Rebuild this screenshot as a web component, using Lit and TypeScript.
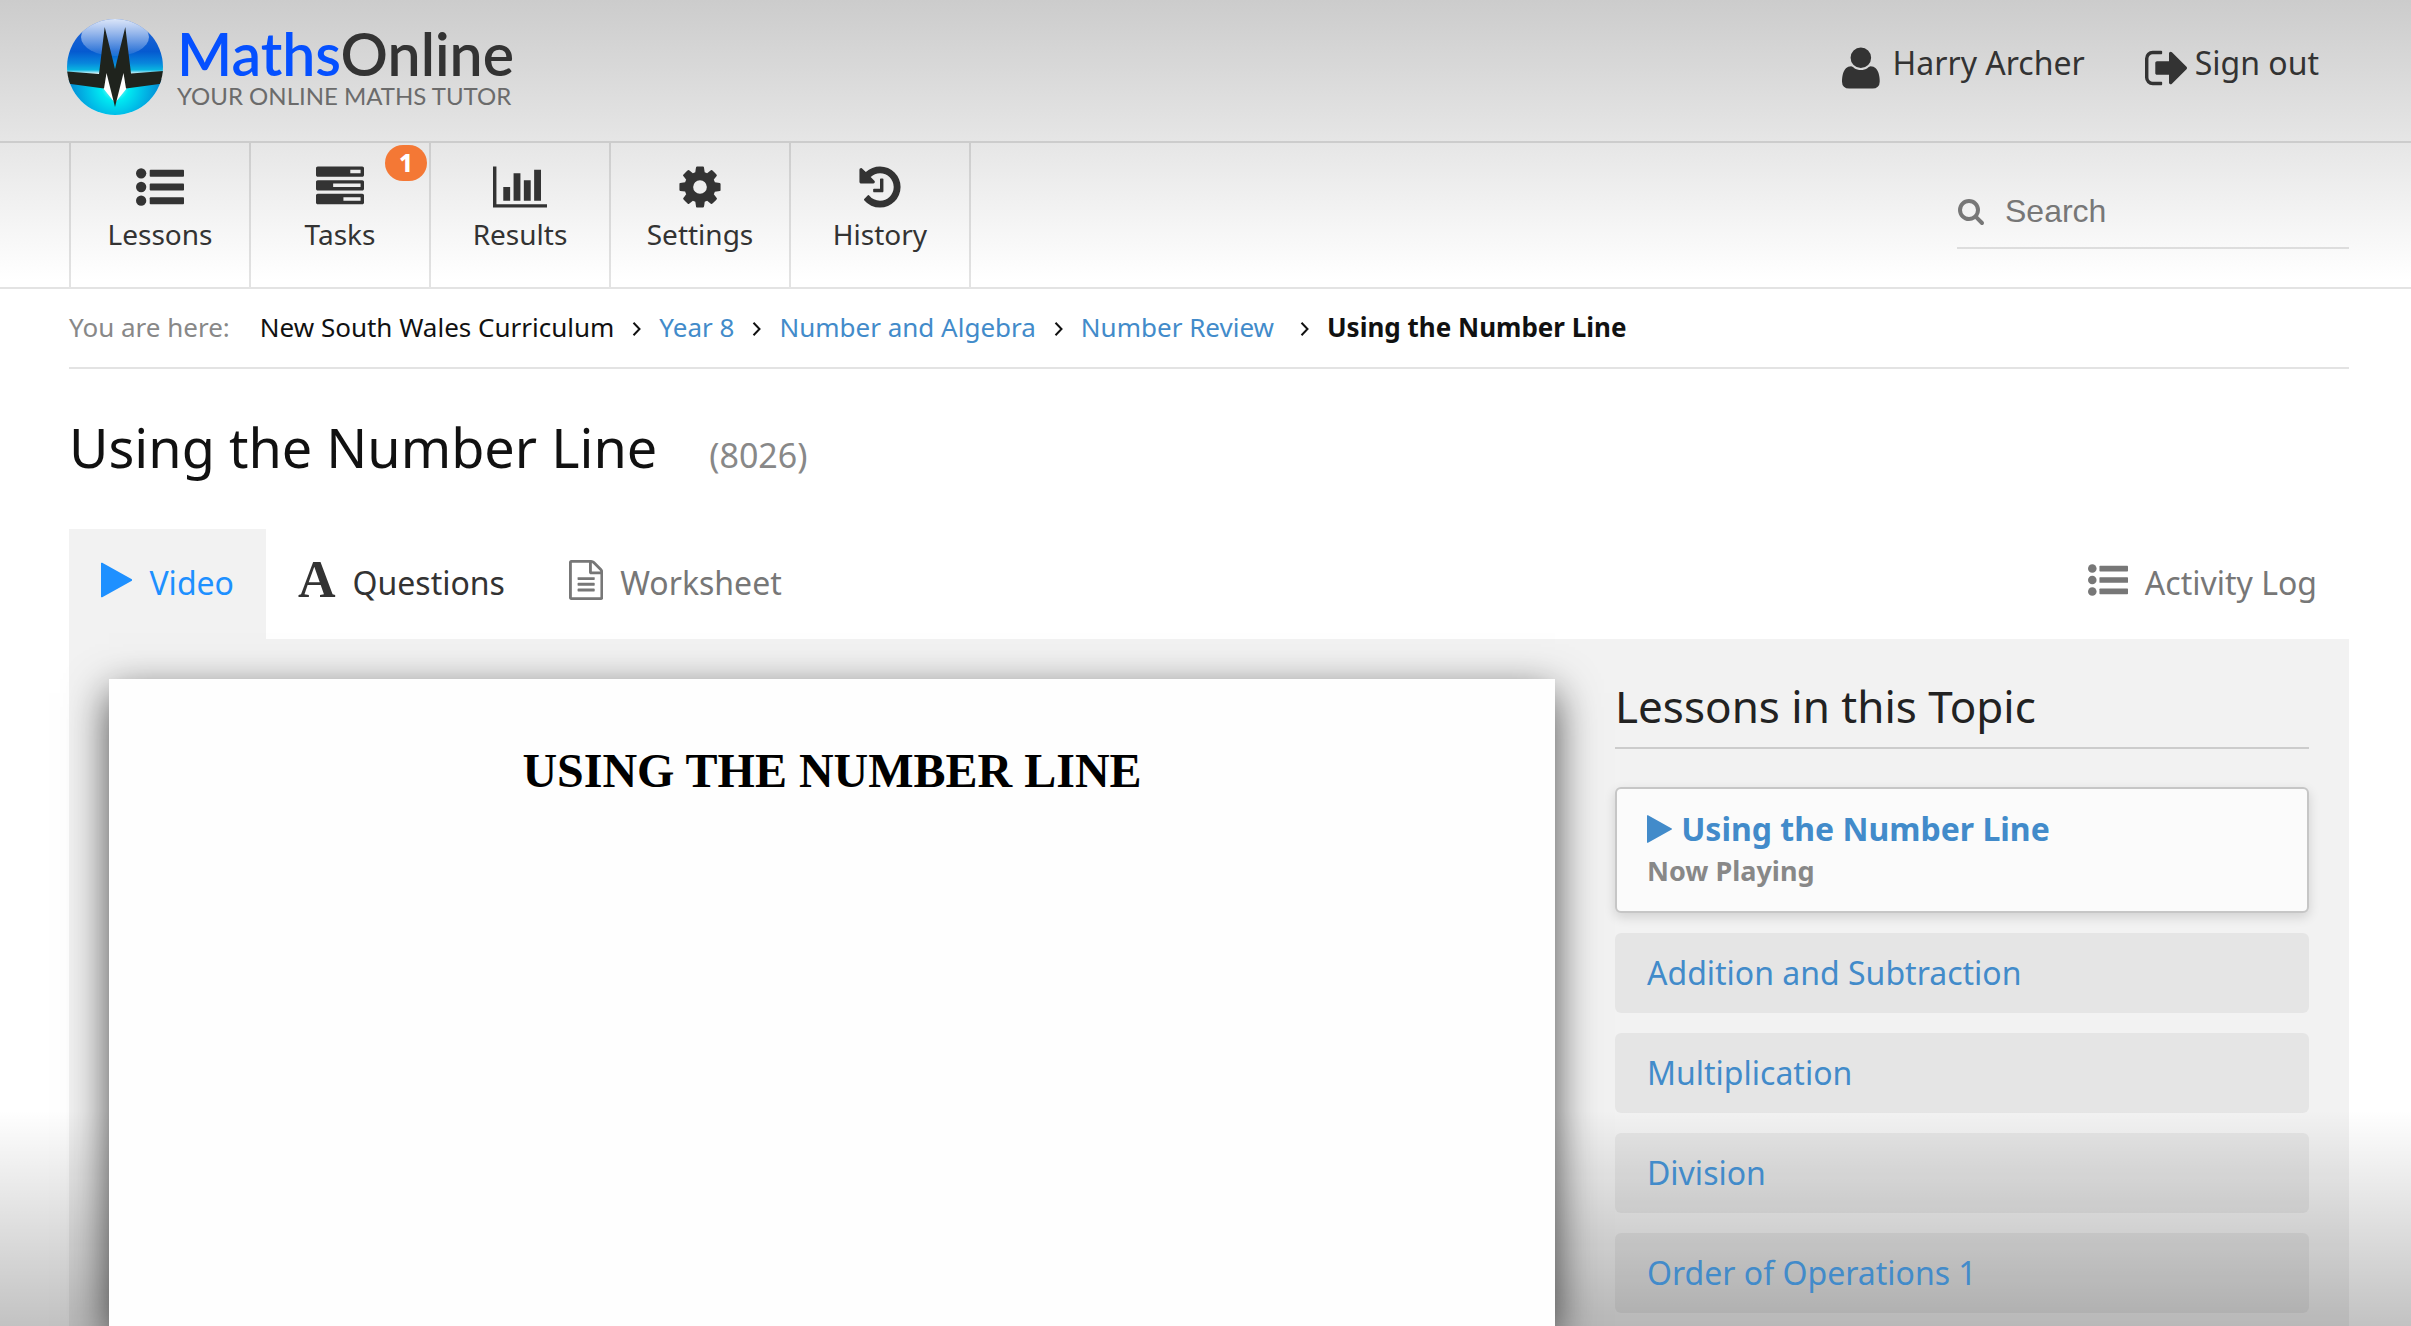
import { LitElement, html, svg, css } from "lit";
import { customElement } from "lit/decorators.js";

const PLAY = svg`<path d="M1576 927l-1328 738q-23 13-39.5 3t-16.5-36v-1472q0-26 16.5-36t39.5 3l1328 738q23 13 23 31t-23 31z"/>`;

const LIST = svg`
  <circle cx="192" cy="384" r="192"/><circle cx="192" cy="896" r="192"/><circle cx="192" cy="1408" r="192"/>
  <rect x="512" y="256" width="1280" height="256" rx="32"/>
  <rect x="512" y="768" width="1280" height="256" rx="32"/>
  <rect x="512" y="1280" width="1280" height="256" rx="32"/>`;

const TASKS = svg`<path fill-rule="evenodd" d="M64 128h1664q26 0 45 19t19 45v256q0 26-19 45t-45 19h-1664q-26 0-45-19t-19-45v-256q0-26 19-45t45-19zM1280 256v128h384v-128zM64 640h1664q26 0 45 19t19 45v256q0 26-19 45t-45 19h-1664q-26 0-45-19t-19-45v-256q0-26 19-45t45-19zM640 768v128h1024v-128zM64 1152h1664q26 0 45 19t19 45v256q0 26-19 45t-45 19h-1664q-26 0-45-19t-19-45v-256q0-26 19-45t45-19zM1024 1280v128h640v-128z"/>`;

const CHART = svg`<path d="M640 896v512h-256v-512h256zm384-512v1024h-256v-1024h256zm1024 1152v128h-2048v-1536h128v1408h1920zm-640-896v768h-256v-768h256zm384-384v1152h-256v-1152h256z"/>`;

const COG = svg`<path d="M1152 896q0-106-75-181t-181-75-181 75-75 181 75 181 181 75 181-75 75-181zm512-109v222q0 12-8 23t-20 13l-185 28q-19 54-39 91 35 50 107 138 10 12 10 25t-9 23q-27 37-99 108t-94 71q-12 0-26-9l-138-108q-44 23-91 38-16 136-29 186-7 28-36 28h-222q-14 0-24.5-8.5t-11.5-21.5l-28-184q-49-16-90-37l-141 107q-10 9-25 9-14 0-25-11-126-114-165-168-7-10-7-23 0-12 8-23 15-21 51-66.5t54-70.5q-27-50-41-99l-183-27q-13-2-21-12.5t-8-23.5v-222q0-12 8-23t19-13l186-28q14-46 39-92-40-57-107-138-10-12-10-24 0-10 9-23 26-36 98.5-107.5t94.5-71.5q13 0 26 10l138 107q44-23 91-38 16-136 29-186 7-28 36-28h222q14 0 24.5 8.5t11.5 21.5l28 184q49 16 90 37l142-107q9-9 24-9 13 0 25 10 129 119 165 170 7 8 7 22 0 12-8 23-15 21-51 66.5t-54 70.5q26 50 41 98l183 28q13 2 21 12.5t8 23.5z"/>`;

const HISTORY = svg`<path d="M1664 896q0 156-61 298t-164 245-245 164-298 61q-172 0-327-72.5t-264-204.5q-7-10-6.5-22.5t8.5-20.5l137-138q10-9 25-9 16 2 23 12 73 95 179 147t225 52q104 0 198.5-40.5t163.5-109.5 109.5-163.5 40.5-198.5-40.5-198.5-109.5-163.5-163.5-109.5-198.5-40.5q-98 0-188 35.5t-160 101.5l137 138q31 30 14 69-17 40-59 40h-448q-26 0-45-19t-19-45v-448q0-42 40-59 39-17 69 14l130 129q107-101 244.5-156.5t284.5-55.5q156 0 298 61t245 164 164 245 61 298zm-640-288v448q0 14-9 23t-23 9h-320q-14 0-23-9t-9-23v-64q0-14 9-23t23-9h224v-352q0-14 9-23t23-9h64q14 0 23 9t9 23z"/>`;

const SEARCH = svg`<path d="M1216 832q0-185-131.5-316.5t-316.5-131.5-316.5 131.5-131.5 316.5 131.5 316.5 316.5 131.5 316.5-131.5 131.5-316.5zm512 832q0 52-38 90t-90 38q-54 0-90-38l-343-342q-179 124-399 124-143 0-273.5-55.5t-225-150-150-225-55.5-273.5 55.5-273.5 150-225 225-150 273.5-55.5 273.5 55.5 225 150 150 225 55.5 273.5q0 220-124 399l343 343q37 37 37 90z"/>`;

const USER = svg`<path d="M1600 1405q0 120-73 189.5t-194 69.5h-874q-121 0-194-69.5t-73-189.5q0-53 3.5-103.5t14-109 26.5-108.5 43-97.5 62-81 85.5-53.5 111.5-20q9 0 42 21.5t74.5 48 108 48 133.5 21.5 133.5-21.5 108-48 74.5-48 42-21.5q61 0 111.5 20t85.5 53.5 62 81 43 97.5 26.5 108.5 14 109 3.5 103.5zm-320-893q0 159-112.5 271.5t-271.5 112.5-271.5-112.5-112.5-271.5 112.5-271.5 271.5-112.5 271.5 112.5 112.5 271.5z"/>`;

const SIGN_OUT = svg`<path d="M704 1440q0 4 1 20t.5 26.5-3 23.5-10 19.5-20.5 6.5h-320q-119 0-203.5-84.5t-84.5-203.5v-704q0-119 84.5-203.5t203.5-84.5h320q13 0 22.5 9.5t9.5 22.5q0 4 1 20t.5 26.5-3 23.5-10 19.5-20.5 6.5h-320q-66 0-113 47t-47 113v704q0 66 47 113t113 47h312l11.5 1 11.5 3 8 5.5 7 9 2 13.5zm928-544q0 26-19 45l-544 544q-19 19-45 19t-45-19-19-45v-288h-448q-26 0-45-19t-19-45v-384q0-26 19-45t45-19h448v-288q0-26 19-45t45-19 45 19l544 544q19 19 19 45z"/>`;

const DOCUMENT = svg`<path d="M1596 380q28 28 48 76t20 88v1152q0 40-28 68t-68 28h-1344q-40 0-68-28t-28-68v-1600q0-40 28-68t68-28h896q40 0 88 20t76 48zm-444-244v376h376q-10-29-22-41l-313-313q-12-12-41-22zm384 1528v-1024h-416q-40 0-68-28t-28-68v-416h-768v1536h1280zm-1024-864q0-14 9-23t23-9h704q14 0 23 9t9 23v64q0 14-9 23t-23 9h-704q-14 0-23-9t-9-23v-64zm736 224q14 0 23 9t9 23v64q0 14-9 23t-23 9h-704q-14 0-23-9t-9-23v-64q0-14 9-23t23-9h704zm0 256q14 0 23 9t9 23v64q0 14-9 23t-23 9h-704q-14 0-23-9t-9-23v-64q0-14 9-23t23-9h704z"/>`;

const icon = (shape: unknown, viewBox = "0 0 1792 1792") =>
  html`<svg class="icon" viewBox=${viewBox} aria-hidden="true">${shape}</svg>`;

const NAV = [
  { label: "Lessons", shape: LIST, box: "0 0 1792 1792" },
  { label: "Tasks", shape: TASKS, box: "0 0 1792 1792", badge: 1 },
  { label: "Results", shape: CHART, box: "0 0 2048 1792" },
  { label: "Settings", shape: COG, box: "0 0 1792 1792" },
  { label: "History", shape: HISTORY, box: "0 0 1792 1792" },
];

const CRUMBS = ["Year 8", "Number and Algebra", "Number Review"];

const LESSONS = ["Addition and Subtraction", "Multiplication", "Division", "Order of Operations 1"];

@customElement("mo-logo")
class MoLogo extends LitElement {
  static styles = css`
    :host {
      display: block;
    }
    .logo {
      display: flex;
      align-items: flex-start;
      gap: 14px;
      text-decoration: none;
      font-family: Lato, "Liberation Sans", sans-serif;
      white-space: nowrap;
    }
    .globe {
      width: 96px;
      height: 96px;
      flex: none;
    }
    .words {
      display: flex;
      flex-direction: column;
      padding-top: 13px;
    }
    .name {
      font-size: 59px;
      line-height: 44px;
      font-weight: 600;
      color: #333;
    }
    .maths {
      color: #0550ff;
    }
    .tagline {
      font-size: 24px;
      line-height: 40px;
      color: #6b6b6b;
    }
  `;

  render() {
    return html`
      <a class="logo" href="#home">
        <svg class="globe" viewBox="0 0 96 96" aria-hidden="true">
          <defs>
            <linearGradient id="sky" x1="0" y1="0" x2="0" y2="1">
              <stop offset="0" stop-color="#2a68d8" />
              <stop offset=".34" stop-color="#055ad0" />
              <stop offset=".46" stop-color="#0886dc" />
              <stop offset=".53" stop-color="#08b4e0" />
              <stop offset=".57" stop-color="#e8fbff" />
            </linearGradient>
            <radialGradient id="sea" gradientUnits="userSpaceOnUse" cx="48" cy="68" r="46">
              <stop offset="0" stop-color="#d8ffff" />
              <stop offset=".3" stop-color="#00eaf2" />
              <stop offset=".6" stop-color="#00bfe8" />
              <stop offset="1" stop-color="#0588d4" />
            </radialGradient>
            <linearGradient id="gloss" x1="0" y1="0" x2="0" y2="1">
              <stop offset="0" stop-color="#fff" stop-opacity=".85" />
              <stop offset="1" stop-color="#fff" stop-opacity=".08" />
            </linearGradient>
            <clipPath id="disc"><circle cx="48" cy="48" r="48" /></clipPath>
          </defs>
          <g clip-path="url(#disc)">
            <rect width="96" height="96" fill="url(#sky)" />
            <rect y="60" width="96" height="36" fill="url(#sea)" />
            <ellipse cx="48" cy="18" rx="34" ry="19" fill="url(#gloss)" />
            <path d="M36 69L39.500 52L48 62L56.500 52L60 69L48 84z" fill="#fff" />
            <path
              d="M0 52.500L32 55L37.700 8L48 50L58.300 8L64 54.500L96 52V64.500L59 69.500L56.500 54L48 88L39.500 54L37 69.500L0 64.500z"
              fill="#1f231d"
            />
          </g>
        </svg>
        <span class="words">
          <span class="name"><span class="maths">Maths</span>Online</span>
          <span class="tagline">YOUR ONLINE MATHS TUTOR</span>
        </span>
      </a>
    `;
  }
}

@customElement("app-root")
class AppRoot extends LitElement {
  static styles = css`
    :host {
      --line: rgba(0, 0, 0, 0.11);
      --link: #428bca;
      --ink: #333;
      --muted: #777;
      --panel: rgba(0, 0, 0, 0.05);
      display: flex;
      flex-direction: column;
      min-height: 100vh;
      font-family: "Noto Sans", sans-serif;
      font-size: 32px;
      color: #111;
      background:
        linear-gradient(#ccc, #fff) top / 100% 280px no-repeat,
        linear-gradient(rgba(0, 0, 0, 0), rgba(0, 0, 0, 0.24)) bottom / 100% 216px no-repeat,
        #fff;
    }
    *,
    *::before {
      box-sizing: border-box;
    }
    a {
      color: inherit;
      text-decoration: none;
    }
    ul,
    ol {
      list-style: none;
      margin: 0;
      padding: 0;
    }
    h1,
    h2 {
      margin: 0;
      font-weight: 400;
    }
    button {
      font: inherit;
      color: inherit;
      border: 0;
      margin: 0;
      background: none;
      cursor: pointer;
    }
    .icon {
      display: block;
      flex: none;
      height: 48px;
      fill: currentColor;
    }
    .row {
      padding: 0 62px 0 69px;
    }

    .header {
      display: flex;
      justify-content: space-between;
      align-items: flex-start;
      height: 143px;
      padding-left: 67px;
      border-bottom: 2px solid var(--line);
    }
    .logo {
      margin-top: 19px;
    }
    .account {
      display: flex;
      gap: 60px;
      height: 124px;
      padding-right: 30px;
      color: var(--ink);
    }
    .account-link {
      display: flex;
      align-items: center;
      gap: 8px;
    }
    .account-link .icon {
      margin-top: 12px;
    }

    .nav {
      display: flex;
      justify-content: space-between;
      align-items: flex-end;
      height: 146px;
      border-bottom: 2px solid var(--line);
    }
    .menu {
      display: flex;
      align-self: stretch;
      border-right: 2px solid var(--line);
    }
    .menu-item {
      display: flex;
      width: 180px;
      border-left: 2px solid var(--line);
    }
    .menu-link {
      position: relative;
      flex: 1;
      display: flex;
      flex-direction: column;
      align-items: center;
      padding-top: 20px;
      font-size: 28px;
      line-height: 46px;
      color: var(--ink);
    }
    .badge {
      position: absolute;
      top: 2px;
      right: 2px;
      width: 42px;
      height: 36px;
      border-radius: 18px;
      background: #f47835;
      color: #fff;
      font-size: 24px;
      font-weight: 800;
      line-height: 36px;
      text-align: center;
    }
    .search {
      display: flex;
      align-items: center;
      gap: 20px;
      width: 392px;
      height: 74px;
      margin-bottom: 38px;
      border-bottom: 2px solid var(--line);
      color: var(--muted);
    }
    .search .icon {
      height: 28px;
    }
    .search-input {
      flex: 1;
      min-width: 0;
      padding: 0;
      border: 0;
      outline: 0;
      background: none;
      color: var(--ink);
      font-family: "Liberation Sans", Arial, sans-serif;
      font-size: 32px;
    }
    .search-input::placeholder {
      color: var(--muted);
      opacity: 1;
    }

    .crumbs {
      display: flex;
      align-items: center;
      gap: 30px;
      height: 80px;
      padding-bottom: 2px;
      border-bottom: 2px solid var(--line);
      font-size: 26px;
    }
    .crumbs-label {
      color: #888;
    }
    .crumb-list,
    .crumb {
      display: flex;
      align-items: center;
      gap: 18px;
    }
    .crumb a {
      color: var(--link);
    }
    .crumb:nth-last-child(2) {
      gap: 26px;
    }
    .crumb:last-child {
      font-weight: 700;
    }
    .chevron {
      width: 9px;
      height: 14px;
      margin-top: 4px;
      fill: none;
      stroke: #111;
      stroke-width: 2;
    }

    .main {
      flex: 1;
      display: flex;
      flex-direction: column;
    }
    .title {
      display: flex;
      align-items: baseline;
      gap: 52px;
      padding-top: 38px;
      height: 160px;
    }
    .title h1 {
      font-size: 54px;
      line-height: 80px;
    }
    .code {
      font-size: 34px;
      color: #888;
    }
    .tabs {
      display: flex;
      height: 110px;
    }
    .tab {
      display: flex;
      align-items: center;
      gap: 17px;
      padding: 0 32px 4px;
      color: var(--ink);
    }
    .tab .icon {
      height: 40px;
      margin-bottom: 4px;
    }
    .tab.active {
      background: var(--panel);
      color: #1e90ff;
    }
    .tab.quiet {
      color: var(--muted);
    }
    .tab.end {
      margin-left: auto;
    }
    .tab-letter {
      font-family: "Liberation Serif", serif;
      font-weight: 700;
      font-size: 52px;
      line-height: 40px;
      margin-bottom: 4px;
    }

    .panel {
      flex: 1;
      display: grid;
      grid-template-columns: 1446fr 694fr;
      gap: 60px;
      padding: 40px 40px 0;
      background: var(--panel);
    }
    .video {
      padding-top: 64px;
      background: #fefefe;
      box-shadow: 0 14px 40px rgba(0, 0, 0, 0.7);
      font-family: "Liberation Serif", serif;
      font-size: 48px;
      font-weight: 700;
      line-height: 56px;
      color: #000;
      text-align: center;
    }
    .topic {
      padding-bottom: 13px;
    }
    .topic h2 {
      padding-bottom: 14px;
      margin-bottom: 38px;
      border-bottom: 2px solid #ccc;
      font-size: 44px;
      line-height: 54px;
      color: #222;
    }
    .lessons {
      display: flex;
      flex-direction: column;
      gap: 20px;
      color: var(--link);
    }
    .lesson {
      display: block;
      padding: 0 32px;
      border-radius: 6px;
      background: rgba(0, 0, 0, 0.05);
      line-height: 80px;
    }
    .lesson.current {
      padding: 18px 30px 20px;
      border: 2px solid #c6c6c6;
      background: #fbfbfb;
      box-shadow: 0 4px 12px rgba(0, 0, 0, 0.14);
      font-weight: 700;
    }
    .lesson-name {
      display: flex;
      align-items: center;
      gap: 9px;
      line-height: 44px;
    }
    .lesson-name .icon {
      height: 32px;
    }
    .lesson-state {
      display: block;
      font-size: 27px;
      line-height: 40px;
      color: #888;
    }
  `;

  private chevron() {
    return html`<svg class="chevron" viewBox="0 0 9 14" aria-hidden="true"><path d="M1.500 .8L7.500 7L1.500 13.200" /></svg>`;
  }

  render() {
    return html`
      <header class="header row">
        <mo-logo class="logo"></mo-logo>
        <div class="account">
          <a class="account-link" href="#profile">${icon(USER, "192 0 1600 1792")}Harry Archer</a>
          <a class="account-link" href="#signout">${icon(SIGN_OUT, "64 0 1568 1792")}Sign out</a>
        </div>
      </header>

      <nav class="nav row">
        <ul class="menu">
          ${NAV.map(
            (item) => html`<li class="menu-item">
              <a class="menu-link" href="#${item.label.toLowerCase()}">
                ${icon(item.shape, item.box)}
                <span>${item.label}</span>
                ${item.badge ? html`<span class="badge">${item.badge}</span>` : null}
              </a>
            </li>`
          )}
        </ul>
        <label class="search">
          ${icon(SEARCH)}
          <input class="search-input" type="text" placeholder="Search" aria-label="Search" />
        </label>
      </nav>

      <main class="main row">
        <div class="crumbs">
          <span class="crumbs-label">You are here:</span>
          <ol class="crumb-list">
            <li class="crumb">New South Wales Curriculum ${this.chevron()}</li>
            ${CRUMBS.map((name) => html`<li class="crumb"><a href="#topic">${name}</a>${this.chevron()}</li>`)}
            <li class="crumb">Using the Number Line</li>
          </ol>
        </div>

        <div class="title">
          <h1>Using the Number Line</h1>
          <span class="code">(8026)</span>
        </div>

        <div class="tabs">
          <button class="tab active">${icon(PLAY, "192 0 1408 1792")}Video</button>
          <button class="tab"><span class="tab-letter" aria-hidden="true">A</span>Questions</button>
          <button class="tab quiet">${icon(DOCUMENT, "128 0 1536 1792")}Worksheet</button>
          <button class="tab quiet end">${icon(LIST)}Activity Log</button>
        </div>

        <div class="panel">
          <section class="video">USING THE NUMBER LINE</section>
          <aside class="topic">
            <h2>Lessons in this Topic</h2>
            <ul class="lessons">
              <li>
                <a class="lesson current" href="#lesson">
                  <span class="lesson-name">${icon(PLAY, "192 0 1408 1792")}Using the Number Line</span>
                  <span class="lesson-state">Now Playing</span>
                </a>
              </li>
              ${LESSONS.map((name) => html`<li><a class="lesson" href="#lesson">${name}</a></li>`)}
            </ul>
          </aside>
        </div>
      </main>
    `;
  }
}
